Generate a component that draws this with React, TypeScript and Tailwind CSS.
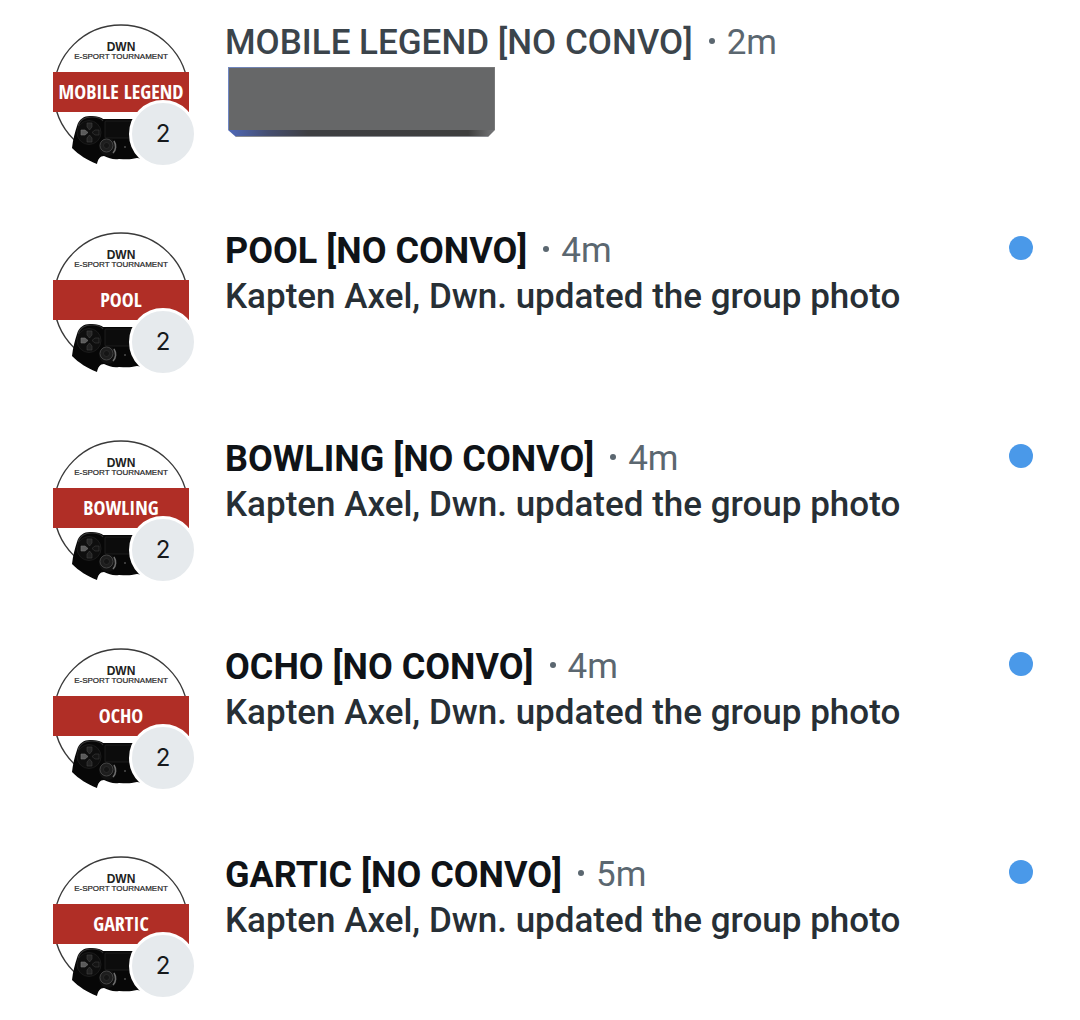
type Conversation = {
  id: number;
  name: string;
  game: string;
  time: string;
  members: number;
  message?: string;
};

const conversations: Conversation[] = [
  { id: 1, name: "MOBILE LEGEND [NO CONVO]", game: "MOBILE LEGEND", time: "2m", members: 2 },
  {
    id: 2,
    name: "POOL [NO CONVO]",
    game: "POOL",
    time: "4m",
    members: 2,
    message: "Kapten Axel, Dwn. updated the group photo",
  },
  {
    id: 3,
    name: "BOWLING [NO CONVO]",
    game: "BOWLING",
    time: "4m",
    members: 2,
    message: "Kapten Axel, Dwn. updated the group photo",
  },
  {
    id: 4,
    name: "OCHO [NO CONVO]",
    game: "OCHO",
    time: "4m",
    members: 2,
    message: "Kapten Axel, Dwn. updated the group photo",
  },
  {
    id: 5,
    name: "GARTIC [NO CONVO]",
    game: "GARTIC",
    time: "5m",
    members: 2,
    message: "Kapten Axel, Dwn. updated the group photo",
  },
];

function Controller() {
  return (
    <g>
      <path
        d="M23 128 C24 119 26 112 28 106 C30 99 35 96 41 96 C47 96 52 97 54 99 L90 99 C95 96 105 96 110 99 C116 104 118 116 120 128 L100 142 C95 141 93 138 88 138 C80 140 76 139 70 139 C64 140 60 138 55 136 C51 136 49 139 48 144 C38 140 30 135 23 128 Z"
        fill="#070707"
      />
      <path d="M29 106 C31 99 37 97 43 97 C48 97 52 98 54 101" fill="none" stroke="#333" strokeWidth="1.2" />
      <rect x="56" y="101" width="32" height="17" rx="1" fill="#0c0c0c" stroke="#222" strokeWidth="0.8" />
      {/* d-pad */}
      <circle cx="40" cy="112.5" r="12" fill="#0e0e0e" stroke="#1f1f1f" strokeWidth="0.8" />
      <path d="M38 103 h5 v4 l-2.5 3 l-2.5 -3 Z" fill="#262626" stroke="#444" strokeWidth="0.6" />
      <path d="M38 122 h5 v-4 l-2.5 -3 l-2.5 3 Z" fill="#222" stroke="#444" strokeWidth="0.6" />
      <path d="M32 110 h4 l3 2.5 l-3 2.5 h-4 Z" fill="#5a5a5a" stroke="#777" strokeWidth="0.6" />
      <path d="M50 110 h-4 l-3 2.5 l3 2.5 h4 Z" fill="#141414" stroke="#3c3c3c" strokeWidth="0.6" />
      {/* analog stick */}
      <circle cx="59" cy="127" r="9" fill="#101010" />
      <circle cx="57.5" cy="125.5" r="6.5" fill="#1e1e1e" stroke="#444" strokeWidth="1" />
      <circle cx="57.5" cy="125.5" r="3" fill="#151515" stroke="#333" strokeWidth="0.6" />
      <path d="M65 121 C67.5 125 67 130 64 133" fill="none" stroke="#6e6e6e" strokeWidth="1.5" />
      <circle cx="76" cy="127" r="1" fill="#4d4d4d" />
    </g>
  );
}

function GroupAvatar({ game, members }: { game: string; members: number }) {
  return (
    <div className="relative size-36 shrink-0">
      <svg viewBox="0 0 144 144" className="size-full" role="img" aria-label={game}>
        <circle cx="72" cy="72" r="67" fill="#fff" stroke="#3a3a3a" strokeWidth="1.4" />
        <rect x="36" y="132" width="86" height="12" fill="#fff" />
        <g fontFamily="'Liberation Sans', Arial, sans-serif" fill="#222" textAnchor="middle">
          <text x="72" y="31" fontSize="12" fontWeight="700">
            DWN
          </text>
          <text x="72" y="39" fontSize="8" stroke="#222" strokeWidth="0.2">
            E-SPORT TOURNAMENT
          </text>
        </g>
        <rect x="4" y="52" width="136" height="40" fill="#b02e26" />
        <text
          x="72"
          y="79"
          fontSize="20"
          fontWeight="700"
          fontFamily="'Open Sans Condensed', 'Roboto Condensed', sans-serif"
          fill="#fff"
          textAnchor="middle"
        >
          {game}
        </text>
        <Controller />
      </svg>
      <span className="absolute -right-1 -bottom-1 flex size-[68px] items-center justify-center rounded-full border-[3px] border-white bg-[#e6eaed] font-[Inter,sans-serif] text-2xl text-[#16191c]">
        {members}
      </span>
    </div>
  );
}

function HiddenMessage() {
  return (
    <svg viewBox="0 0 268 70" className="mt-px ml-[3px] h-[70px] w-[268px]" role="img" aria-label="Hidden message">
      <defs>
        <linearGradient id="bevel" x1="0" x2="1" y1="0" y2="0">
          <stop offset="0" stopColor="#4f68b8" />
          <stop offset="0.15" stopColor="#454e70" />
          <stop offset="0.3" stopColor="#3e3f42" />
          <stop offset="0.9" stopColor="#3e3e3e" />
          <stop offset="1" stopColor="#77787a" />
        </linearGradient>
        <linearGradient id="edge" x1="0" x2="1" y1="0" y2="0">
          <stop offset="0" stopColor="#6f87c4" />
          <stop offset="0.4" stopColor="#777879" />
        </linearGradient>
      </defs>
      <path d="M0 63 H267 L260 70 H8 Z" fill="url(#bevel)" />
      <path d="M8 69.5 H260" stroke="#8b8d92" />
      <rect width="267" height="63" rx="1" fill="#666768" />
      <path d="M0.5 63 V0.5 H266.5 V63" fill="none" stroke="url(#edge)" />
    </svg>
  );
}

function ConversationRow({ conversation }: { conversation: Conversation }) {
  const { name, game, time, members, message } = conversation;
  const unread = Boolean(message);

  return (
    <li>
      <a href={`#conversation-${conversation.id}`} className="flex items-start gap-8 pt-5 pr-[47px] pb-11 pl-[49px]">
        <GroupAvatar game={game} members={members} />
        <div className="min-w-0 flex-1">
          <div className="flex h-[46px] items-center whitespace-nowrap">
            <h2
              className={
                unread
                  ? "text-[36px] leading-[46px] font-bold text-[#0f1317]"
                  : "text-[35px] leading-[46px] font-medium text-[#3b444b]"
              }
            >
              {name}
            </h2>
            <span className="mr-3 mb-1 ml-4 size-1.5 rounded-full bg-[#5b6770]" />
            <time className="text-[35px] leading-[46px] text-[#5b6770]">{time}</time>
          </div>
          {message ? (
            <p className="text-[35px] leading-[46px] font-medium text-[#272f35]">{message}</p>
          ) : (
            <HiddenMessage />
          )}
        </div>
        {unread && <span role="img" aria-label="Unread" className="mt-2 size-6 shrink-0 rounded-full bg-[#4a99e9]" />}
      </a>
    </li>
  );
}

export default function App() {
  return (
    <main className="min-h-screen bg-white font-[Roboto,sans-serif]">
      <ul>
        {conversations.map((conversation) => (
          <ConversationRow key={conversation.id} conversation={conversation} />
        ))}
      </ul>
    </main>
  );
}
